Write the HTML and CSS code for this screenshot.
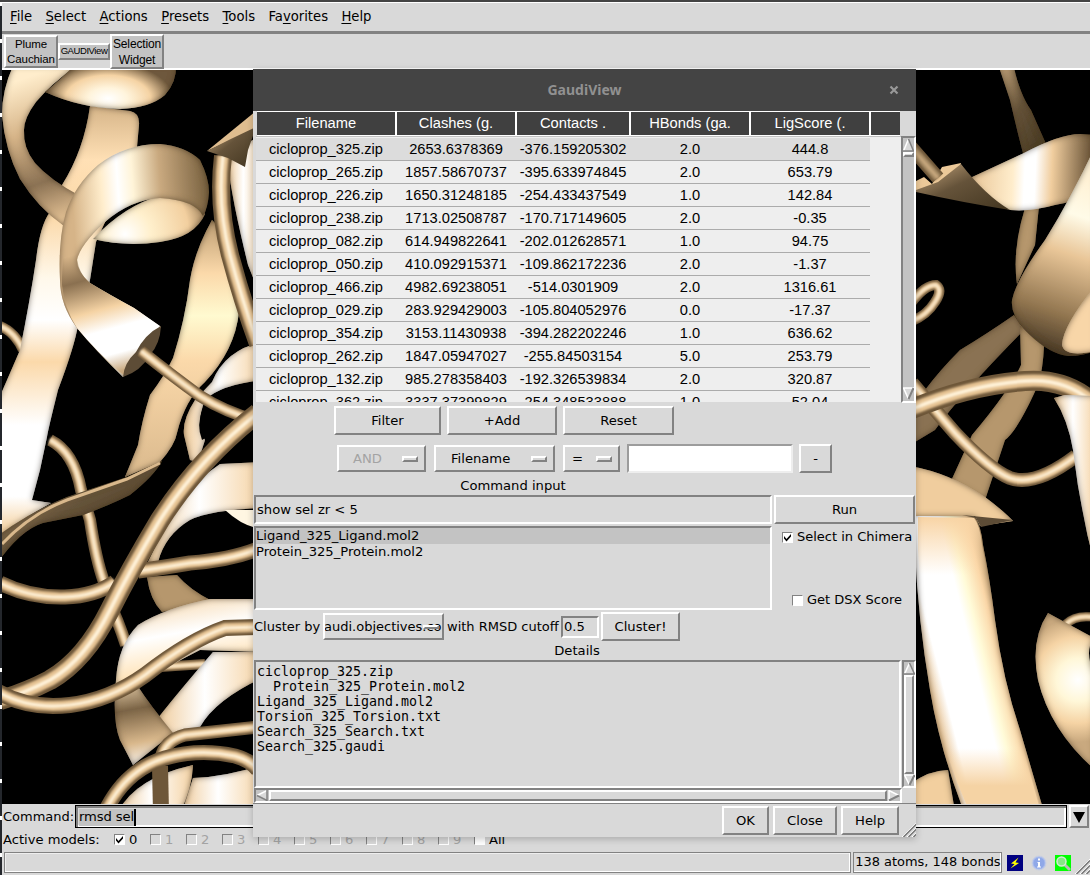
FILE: index.html
```
<!DOCTYPE html>
<html lang="en">
<head>
<meta charset="utf-8">
<title>GaudiView</title>
<link rel="stylesheet" href="styles.css">
</head>
<body>
<div class="screen">
<main class="main-window">
  <nav class="menubar">
    <span><u>F</u>ile</span><span><u>S</u>elect</span><span><u>A</u>ctions</span><span><u>P</u>resets</span><span><u>T</u>ools</span><span>Fa<u>v</u>orites</span><span><u>H</u>elp</span>
  </nav>
  <div class="toolbar">
    <button class="tool tool-plume">Plume<br>Cauchian</button>
    <button class="tool tool-gaudi">GAUDIView</button>
    <button class="tool tool-select">Selection<br>Widget</button>
  </div>
  <svg class="viewport" viewBox="2 70 1088 734" width="1088" height="734">
    <defs>
      <filter id="shade" x="-5%" y="-5%" width="110%" height="110%">
        <feGaussianBlur in="SourceAlpha" stdDeviation="3" result="b"/>
        <feFlood flood-color="#4a3820"/>
        <feComposite operator="out" in2="b"/>
        <feComposite operator="in" in2="SourceAlpha" result="edge"/>
        <feMerge><feMergeNode in="SourceGraphic"/><feMergeNode in="edge"/></feMerge>
      </filter>
      <linearGradient id="gA" gradientUnits="userSpaceOnUse" x1="0" y1="110" x2="0" y2="530">
        <stop offset="0" stop-color="#d9b88c"/><stop offset=".12" stop-color="#ffe0b5"/><stop offset=".25" stop-color="#fbd8a8"/><stop offset=".4" stop-color="#fff8ea"/><stop offset=".5" stop-color="#fff"/><stop offset=".6" stop-color="#fbd9aa"/><stop offset=".75" stop-color="#fff"/><stop offset=".92" stop-color="#fff"/><stop offset="1" stop-color="#f5d3a4"/>
      </linearGradient>
      <linearGradient id="gB" gradientUnits="userSpaceOnUse" x1="20" y1="80" x2="70" y2="220">
        <stop offset="0" stop-color="#ffedcc"/><stop offset=".35" stop-color="#d6b488"/><stop offset=".7" stop-color="#8b7254"/><stop offset="1" stop-color="#e9c698"/>
      </linearGradient>
      <radialGradient id="gTop" gradientUnits="userSpaceOnUse" cx="108" cy="99" r="65" gradientTransform="matrix(1 0 0 .55 0 44)">
        <stop offset="0" stop-color="#fff"/><stop offset=".3" stop-color="#fff4dc"/><stop offset=".65" stop-color="#f5d3a4"/><stop offset="1" stop-color="#6e583c"/>
      </radialGradient>
      <linearGradient id="gC" gradientUnits="userSpaceOnUse" x1="72" y1="200" x2="209" y2="190">
        <stop offset="0" stop-color="#d6b488"/><stop offset=".22" stop-color="#ffedcc"/><stop offset=".34" stop-color="#fff"/><stop offset=".45" stop-color="#fff4d8"/><stop offset=".65" stop-color="#c9a97f"/><stop offset="1" stop-color="#77603f"/>
      </linearGradient>
      <linearGradient id="gC3" gradientUnits="userSpaceOnUse" x1="85" y1="252" x2="118" y2="372">
        <stop offset="0" stop-color="#8a7050" stop-opacity="0"/><stop offset=".22" stop-color="#8a7050"/><stop offset=".48" stop-color="#f5d3a4"/><stop offset=".65" stop-color="#fff"/><stop offset=".85" stop-color="#fff"/><stop offset="1" stop-color="#c9a97f"/>
      </linearGradient>
      <radialGradient id="gC2" gradientUnits="userSpaceOnUse" cx="125" cy="234" r="85">
        <stop offset="0" stop-color="#fff"/><stop offset=".3" stop-color="#fff0cd"/><stop offset=".75" stop-color="#f2cf9f"/><stop offset="1" stop-color="#9a7d58"/>
      </radialGradient>
      <linearGradient id="gD" gradientUnits="userSpaceOnUse" x1="0" y1="215" x2="0" y2="480">
        <stop offset="0" stop-color="#b6976d"/><stop offset=".22" stop-color="#fbd9aa"/><stop offset=".38" stop-color="#fffad0"/><stop offset=".55" stop-color="#fbd9aa"/><stop offset="1" stop-color="#d9b88c"/>
      </linearGradient>
      <linearGradient id="gDark" x1="0" y1="0" x2="1" y2="1">
        <stop offset="0" stop-color="#c9a97f"/><stop offset=".45" stop-color="#65533a"/><stop offset="1" stop-color="#42351f"/>
      </linearGradient>
      <linearGradient id="gLite" x1="0" y1="0" x2="1" y2="0">
        <stop offset="0" stop-color="#f0cd9e"/><stop offset=".45" stop-color="#fff"/><stop offset="1" stop-color="#f5d3a4"/>
      </linearGradient>
      <linearGradient id="gM" gradientUnits="userSpaceOnUse" x1="125" y1="600" x2="155" y2="765">
        <stop offset="0" stop-color="#f5d3a4"/><stop offset=".25" stop-color="#fff"/><stop offset=".45" stop-color="#ffe6bf"/><stop offset=".65" stop-color="#7b6446"/><stop offset=".85" stop-color="#d9b88c"/><stop offset="1" stop-color="#fff"/>
      </linearGradient>
      <linearGradient id="gHelix" gradientUnits="userSpaceOnUse" x1="972" y1="160" x2="1090" y2="165">
        <stop offset="0" stop-color="#e9c698"/><stop offset=".35" stop-color="#ffedcc"/><stop offset=".45" stop-color="#fff"/><stop offset=".54" stop-color="#fff"/><stop offset=".68" stop-color="#f0cd9e"/><stop offset="1" stop-color="#6b5539"/>
      </linearGradient>
      <linearGradient id="gR" gradientUnits="userSpaceOnUse" x1="1085" y1="180" x2="1028" y2="350">
        <stop offset="0" stop-color="#fff2d6"/><stop offset=".2" stop-color="#fffbe8"/><stop offset=".42" stop-color="#e9c698"/><stop offset=".75" stop-color="#927650"/><stop offset="1" stop-color="#3d3020"/>
      </linearGradient>
      <linearGradient id="gCol" gradientUnits="userSpaceOnUse" x1="921" y1="655" x2="1005" y2="634">
        <stop offset="0" stop-color="#e9c698"/><stop offset=".16" stop-color="#fff"/><stop offset=".58" stop-color="#fff"/><stop offset=".7" stop-color="#fffbd8"/><stop offset=".88" stop-color="#fbd7a8"/><stop offset="1" stop-color="#cba87a"/>
      </linearGradient>
      <linearGradient id="gColEnd" x1="0" y1="0" x2="0" y2="1">
        <stop offset="0" stop-color="#f8d4a5"/><stop offset=".2" stop-color="#fbd7a8" stop-opacity="0"/><stop offset=".8" stop-color="#fbd7a8" stop-opacity="0"/><stop offset=".93" stop-color="#f5d3a4"/>
      </linearGradient>
      <radialGradient id="gP" gradientUnits="userSpaceOnUse" cx="1078" cy="680" r="62">
        <stop offset="0" stop-color="#fff"/><stop offset=".35" stop-color="#fff7d8"/><stop offset=".7" stop-color="#f5d3a4"/><stop offset="1" stop-color="#c9a97f"/>
      </radialGradient>
      <path id="t1" d="M223 156Q217 205 230 255Q242 300 258 344"/>
      <path id="t2" d="M141 351Q175 378 200 396Q225 412 258 421"/>
      <path id="t3" d="M0 326Q15 332 23 350"/>
      <path id="t4" d="M50 440Q74 452 81 490L90 520Q96 560 104 582"/>
      <path id="t5" d="M108 600Q118 620 126 645"/>
      <path id="t6" d="M0 583Q30 598 65 597Q95 596 115 582"/>
      <path id="t7" d="M138 571Q160 568 190 563Q230 560 258 549"/>
      <path id="t8" d="M258 413Q200 458 160 520Q130 570 110 610Q85 660 50 680Q25 693 0 700"/>
      <path id="t9" d="M-2 692Q30 710 70 705Q110 700 145 675Q190 640 225 628L258 627"/>
      <path id="t10" d="M160 667L205 664"/>
      <path id="t11" d="M161 758Q165 740 185 735L258 727"/>
      <path id="t12" d="M105 812Q125 770 165 758Q200 748 235 756Q250 760 258 770"/>
      <path id="t13" d="M160 766L161 812"/>
      <path id="r1" d="M910 146L938 178"/>
      <path id="r2" d="M912 302Q925 285 936 285Q943 290 935 302Q927 315 912 321"/>
      <path id="r3" d="M912 409Q970 385 1025 381Q1065 378 1092 402"/>
      <path id="r4" d="M912 383Q935 410 955 433Q990 470 1010 478Q1035 487 1076 456"/>
      <path id="r5" d="M1066 624Q1075 615 1092 617"/>
    </defs>
    <rect x="2" y="70" width="1088" height="734" fill="#000"/>

    <g class="left-structure">
      <g class="tube w10"><use href="#t3"/><use href="#t3"/><use href="#t3"/></g>
      <path filter="url(#shade)" fill="url(#gA)" d="M90 106L130 111Q140 113 139 125L137 147Q120 190 96 242L90 280L78 325Q75 345 58 390Q48 430 47 437L40 470L32 500L51 503Q20 520-6 540L-6 410Q7 380 20 350Q30 300 36 260Q40 225 50 212L62 185Q84 150 90 106Z"/>
      <path filter="url(#shade)" fill="url(#gB)" d="M13 66Q2 90 2 115Q5 150 20 179Q38 208 64 226L80 196Q50 180 35 163Q23 148 24 130Q24 118 36 102Q50 85 76 66Z"/>
      <path filter="url(#shade)" fill="url(#gTop)" d="M45 92Q60 80 76 64L176 64Q177 82 165 95Q150 108 120 109Q80 108 45 92Z"/>
      <path filter="url(#shade)" fill="url(#gD)" d="M212 220Q195 250 190 280Q185 320 173 358Q165 375 150 395Q142 420 138 445L125 477L160 462Q175 445 177 433Q185 400 205 382Q235 350 239 312Q232 270 217 225Z"/>
      <path filter="url(#shade)" fill="url(#gLite)" d="M228 165Q240 145 262 135L262 300L248 265Q232 200 228 165Z"/>
      <path filter="url(#shade)" fill="url(#gLite)" d="M262 342Q225 350 212 382L195 400Q182 420 184 435L190 460L198 462L205 440Q195 425 205 400Q220 385 262 380Z"/>
      <path fill="#000" d="M256 381Q226 391 203 408Q196 425 202 440L222 428L256 406Z"/>
      <g class="tube w18"><use href="#t1"/><use href="#t1"/><use href="#t1"/></g>
      <path fill="#dfbd8f" d="M207 151L256 111V128Q225 143 207 151Z"/>
      <path fill="url(#gDark)" d="M207 151Q230 139 256 127L248 150L245 167L228 158Z"/>
      <path filter="url(#shade)" fill="url(#gC2)" d="M93 239Q125 205 160 196Q190 197 205 214Q195 237 160 242Q125 247 93 239Z"/>
      <path filter="url(#shade)" fill="url(#gC)" d="M160 144Q185 146 200 160Q209 178 209 192Q208 208 203 216Q195 200 160 198Q130 200 105 222Q80 245 77 260Q77 272 90 283Q110 295 134 308L161 327L143 352L123 377Q95 350 77 328Q60 305 60 280Q58 240 66 212Q75 185 98 165Q125 144 160 144Z"/>
      <path fill="url(#gC3)" d="M77 250Q76 272 90 283Q110 295 134 308L160 326L143 352L123 375Q95 350 77 328Q64 308 62 285Q62 265 64 250Z"/>
      <path fill="#5d4c36" d="M161 326Q145 334 136 352Q124 363 123 377Q141 371 150 355Q160 344 161 326Z"/>
      <g class="tube w11"><use href="#t2"/><use href="#t2"/><use href="#t2"/></g>
      <g class="tube w12"><use href="#t4"/><use href="#t4"/><use href="#t4"/></g>
      <g class="tube w12"><use href="#t5"/><use href="#t5"/><use href="#t5"/></g>
      <path filter="url(#shade)" fill="url(#gDark)" d="M162 461L127 477L67 497Q30 512-4 537L-4 565Q20 530 43 523L83 515Q110 505 130 495Q155 475 162 461Z"/>
      <path class="rim" d="M160 463L127 479L67 500Q30 514 2 544"/>
      <path filter="url(#shade)" fill="url(#gLite)" d="M262 462L220 464Q195 480 180 505Q160 535 148 562L158 562Q165 535 190 520Q210 510 262 508Z"/>
      <path fill="#fff6e2" d="M225 510H256V528Q240 524 225 510Z"/>
      <path filter="url(#shade)" fill="#b6976d" d="M147 577Q150 600 162 612L212 601Q190 590 177 575Z"/>
      <g class="tube w15"><use href="#t6"/><use href="#t6"/><use href="#t6"/></g>
      <g class="tube w15"><use href="#t7"/><use href="#t7"/><use href="#t7"/></g>
      <g class="tube w10"><use href="#t10"/><use href="#t10"/><use href="#t10"/></g>
      <path filter="url(#shade)" fill="url(#gLite)" d="M213 652Q180 690 158 718L172 735L200 727Q215 700 262 678L262 652Z"/>
      <path filter="url(#shade)" fill="url(#gM)" d="M262 599H210Q165 608 138 625Q118 645 116 680Q112 720 120 740L133 765L173 733Q150 705 137 685Q170 665 200 650L262 652Z"/>
      <g class="tube w19"><use href="#t8"/><use href="#t8"/><use href="#t8"/></g>
      <g class="tube w16"><use href="#t9"/><use href="#t9"/><use href="#t9"/></g>
      <path filter="url(#shade)" fill="url(#gLite)" d="M118 812Q135 778 193 765Q192 790 180 812Z"/>
      <path filter="url(#shade)" fill="url(#gLite)" d="M193 778Q225 777 262 765V812H182Z"/>
      <g class="tube w13"><use href="#t11"/><use href="#t11"/><use href="#t11"/></g>
      <g class="tube dim w16"><use href="#t13"/></g>
      <g class="tube w15"><use href="#t12"/><use href="#t12"/><use href="#t12"/></g>
    </g>

    <g class="right-structure">
      <path filter="url(#shade)" fill="url(#gDark)" d="M998 64H1013Q1020 95 1031 110L1047 146L1024 157Q1018 135 1010 100Z"/>
      <path filter="url(#shade)" fill="#b6976d" d="M1025 208L1039 206L1035 245L1017 284Q1012 250 1025 208Z"/>
      <path filter="url(#shade)" fill="url(#gHelix)" d="M970 178L1024 153Q1060 134 1080 134L1096 135V190Q1075 202 1055 205Q1030 212 1010 210Q990 205 970 178Z"/>
      <path fill="#ecc999" d="M916 181L924 177L932 184L942 167L961 163L958 176L930 188L916 191Z"/>
      <path fill="url(#gDark)" d="M916 190L938 182L961 164Q985 195 1010 210Q960 202 916 192Z"/>
      <g class="tube dim w14"><use href="#r1"/><use href="#r1"/><use href="#r1"/></g>
      <g class="tube w10"><use href="#r2"/><use href="#r2"/><use href="#r2"/></g>
      <path filter="url(#shade)" fill="#8a7252" d="M1014 315Q985 335 960 350Q940 370 925 390L910 410V445L935 430Q960 395 1024 330Z"/>
      <path filter="url(#shade)" fill="#b6976d" d="M1020 325L1044 346Q1043 370 1038 385Q1018 430 1005 440L985 500L951 481L972 435Q1010 390 1021 365Z"/>
      <path filter="url(#shade)" fill="url(#gR)" d="M1096 145Q1070 200 1045 240Q1016 280 1012 300Q1010 317 1030 335Q1050 354 1068 356Q1085 356 1096 350Z"/>
      <path filter="url(#shade)" fill="#f8d6a8" d="M1096 285Q1063 325 1062 345Q1065 358 1096 351Z"/>
      <g class="tube w14"><use href="#r4"/><use href="#r4"/><use href="#r4"/></g>
      <g class="tube w20"><use href="#r3"/><use href="#r3"/><use href="#r3"/></g>
      <path filter="url(#shade)" fill="url(#gLite)" d="M1054 398L1065 395L1096 396V570Q1080 510 1073 450Q1068 420 1054 398Z"/>
      <path filter="url(#shade)" fill="url(#gCol)" d="M912 514L974 516Q981 525 983 545Q990 580 995 620Q1003 680 1020 730L1044 812H964Q940 750 930 690Q918 620 915 550Z"/>
      <path fill="url(#gColEnd)" d="M918 517L974 518Q980 525 982 545Q989 580 994 620Q1002 680 1018 730L1039 806H967Q942 750 933 690Q921 620 918 550Z"/>
      <path filter="url(#shade)" fill="#f0cd9e" d="M910 466Q950 473 985 497Q1005 512 1013 521L980 526L975 516H910Z"/>
      <path fill="#5d4c36" d="M962 515L1013 520L981 527L976 518Z"/>
      <path filter="url(#shade)" fill="#f2cf9f" d="M910 784Q930 770 948 770L955 812H910Z"/>
      <g class="tube w9"><use href="#r5"/><use href="#r5"/><use href="#r5"/></g>
      <path filter="url(#shade)" fill="url(#gP)" d="M1048 613L1094 638Q1084 650 1094 675V769Q1050 730 1038 680Q1030 640 1048 613Z"/>
    </g>
  </svg>
  <div class="command-row">
    <label>Command:</label>
    <div class="command-entry"><span class="typed">rmsd sel</span></div>
    <button class="drop"><svg width="14" height="12"><path d="M1 1H13L7 12Z"/></svg></button>
  </div>
  <div class="models-row">
    <label>Active models:</label>
    <span class="model on"><i class="check ticked"><svg width="9" height="9"><path d="M1 3L3.500 6L8 1V3.500L3.500 8.500L1 5.500Z"/></svg></i>0</span>
    <span class="model"><i class="check"></i>1</span><span class="model"><i class="check"></i>2</span><span class="model"><i class="check"></i>3</span><span class="model"><i class="check"></i>4</span><span class="model"><i class="check"></i>5</span><span class="model"><i class="check"></i>6</span><span class="model"><i class="check"></i>7</span><span class="model"><i class="check"></i>8</span><span class="model"><i class="check"></i>9</span>
    <span class="model on"><i class="check white"></i>All</span>
  </div>
  <footer class="statusbar">
    <div class="status-message"></div>
    <div class="status-count">138 atoms, 148 bonds</div>
    <svg class="status-icons" width="66" height="16">
      <rect width="16" height="16" fill="#000080"/><path d="M11.500 2.500L4 8.500L7.500 9L3.500 13.500L12 8L8.500 7.500Z" fill="#ff0"/>
      <circle cx="32" cy="8" r="7" fill="#a9bcec" stroke="#c9d0e4"/><circle cx="32" cy="8" r="5.500" fill="#8fa8e8"/><path d="M31 3.500H33V5.500H31ZM30.500 7H33V11.500H34V12.500H30V11.500H31V8H30.500Z" fill="#fff"/>
      <rect x="48" width="16" height="16" fill="#0f0"/><path d="M58 10L62 14" stroke="#b9b9b9" stroke-width="3" stroke-linecap="round"/><circle cx="54.500" cy="6.500" r="4.500" fill="#86e786" stroke="#d5ead5" stroke-width="1.500"/>
    </svg>
    <svg class="grip" width="15" height="15"><path d="M0 15L15 0M5 15L15 5M10 15L15 10" stroke="#fff"/><path d="M1.500 15L15 1.500M6.500 15L15 6.500M11.500 15L15 11.500" stroke="#777" stroke-width="1.500"/></svg>
  </footer>
</main>

<section class="dialog">
  <header class="titlebar"><span class="title">GaudiView</span><svg class="close" width="10" height="10"><path d="M1.500 1.500L8.500 8.500M8.500 1.500L1.500 8.500" stroke="#999" stroke-width="2.200"/></svg></header>
  <div class="table-head">
    <span>Filename</span><span>Clashes (g.</span><span>Contacts .</span><span>HBonds (ga.</span><span>LigScore (.</span><span></span>
  </div>
  <div class="table-wrap">
    <div class="table-body">
      <div class="row picked"><span>cicloprop_325.zip</span><span>2653.6378369</span><span>-376.159205302</span><span>2.0</span><span>444.8</span></div>
      <div class="row"><span>cicloprop_265.zip</span><span>1857.58670737</span><span>-395.633974845</span><span>2.0</span><span>653.79</span></div>
      <div class="row"><span>cicloprop_226.zip</span><span>1650.31248185</span><span>-254.433437549</span><span>1.0</span><span>142.84</span></div>
      <div class="row"><span>cicloprop_238.zip</span><span>1713.02508787</span><span>-170.717149605</span><span>2.0</span><span>-0.35</span></div>
      <div class="row"><span>cicloprop_082.zip</span><span>614.949822641</span><span>-202.012628571</span><span>1.0</span><span>94.75</span></div>
      <div class="row"><span>cicloprop_050.zip</span><span>410.092915371</span><span>-109.862172236</span><span>2.0</span><span>-1.37</span></div>
      <div class="row"><span>cicloprop_466.zip</span><span>4982.69238051</span><span>-514.0301909</span><span>2.0</span><span>1316.61</span></div>
      <div class="row"><span>cicloprop_029.zip</span><span>283.929429003</span><span>-105.804052976</span><span>0.0</span><span>-17.37</span></div>
      <div class="row"><span>cicloprop_354.zip</span><span>3153.11430938</span><span>-394.282202246</span><span>1.0</span><span>636.62</span></div>
      <div class="row"><span>cicloprop_262.zip</span><span>1847.05947027</span><span>-255.84503154</span><span>5.0</span><span>253.79</span></div>
      <div class="row"><span>cicloprop_132.zip</span><span>985.278358403</span><span>-192.326539834</span><span>2.0</span><span>320.87</span></div>
      <div class="row"><span>cicloprop_362.zip</span><span>3337.37399829</span><span>-254.348533888</span><span>1.0</span><span>52.04</span></div>
    </div>
    <div class="vscroll">
      <svg class="arrow" width="11" height="14"><path d="M5.500 1L10.500 13H.5Z" fill="#d9d9d9"/><path d="M.5 13L5.500 1" stroke="#fff" stroke-width="1.500"/><path d="M5.500 1L10.500 13H0" fill="none" stroke="#828282" stroke-width="1.500"/></svg>
      <i class="thumb tiny"></i>
      <svg class="arrow end" width="11" height="14"><path d="M5.500 12L10.500 1H.5Z" fill="#d9d9d9"/><path d="M5.500 12L.5 1H11" fill="none" stroke="#fff" stroke-width="1.500"/><path d="M5.500 12L10.500 1" stroke="#828282" stroke-width="2"/></svg>
    </div>
  </div>
  <div class="filter-buttons"><button class="btn b-filter">Filter</button><button class="btn b-add">+Add</button><button class="btn b-reset">Reset</button></div>
  <div class="filter-row">
    <div class="option o-and">AND<i class="knob"></i></div>
    <div class="option o-name">Filename<i class="knob"></i></div>
    <div class="option o-eq">=<i class="knob"></i></div>
    <div class="filter-entry"></div>
    <button class="btn b-minus">-</button>
  </div>
  <div class="caption cap-command">Command input</div>
  <div class="command-grid">
    <div class="sunken input">show sel zr &lt; 5</div>
    <button class="btn b-run">Run</button>
    <div class="sunken list"><div class="item chosen">Ligand_325_Ligand.mol2</div><div class="item">Protein_325_Protein.mol2</div></div>
    <div class="checks">
      <label><i class="check ticked"><svg width="9" height="9"><path d="M1 3L3.500 6L8 1V3.500L3.500 8.500L1 5.500Z"/></svg></i>Select in Chimera</label>
      <label class="dsx"><i class="check white"></i>Get DSX Score</label>
    </div>
  </div>
  <div class="cluster-row">
    <span class="by">Cluster by</span>
    <div class="option o-obj"><span>audi.objectives.co</span><i class="knob"></i></div>
    <span class="with">with RMSD cutoff</span>
    <div class="sunken cutoff">0.5</div>
    <button class="btn b-cluster">Cluster!</button>
  </div>
  <div class="caption cap-details">Details</div>
  <div class="details">
    <pre class="sunken">cicloprop_325.zip
  Protein_325_Protein.mol2
Ligand_325_Ligand.mol2
Torsion_325_Torsion.txt
Search_325_Search.txt
Search_325.gaudi</pre>
    <div class="vscroll">
      <svg class="arrow" width="11" height="13"><path d="M5.500 1L10.500 12H.5Z" fill="#d9d9d9"/><path d="M.5 12L5.500 1" stroke="#fff" stroke-width="1.500"/><path d="M5.500 1L10.500 12H0" fill="none" stroke="#828282" stroke-width="1.500"/></svg>
      <i class="thumb full"></i>
      <svg class="arrow end" width="11" height="12"><path d="M5.500 11L10.500 1H.5Z" fill="#d9d9d9"/><path d="M5.500 11L.5 1H11" fill="none" stroke="#fff" stroke-width="1.500"/><path d="M5.500 11L10.500 1" stroke="#828282" stroke-width="2"/></svg>
    </div>
  </div>
  <div class="hscroll">
    <svg width="12" height="11"><path d="M1 5.500L11 .5V10.500Z" fill="#d9d9d9"/><path d="M1 5.500L11 .5" stroke="#fff" stroke-width="1.500"/><path d="M1 5.500L11 10.500V0" fill="none" stroke="#828282" stroke-width="1.500"/></svg>
    <i class="thumb wide"></i>
    <svg width="12" height="11"><path d="M11 5.500L1 .5V10.500Z" fill="#d9d9d9"/><path d="M11 5.500L1 .5V11" fill="none" stroke="#fff" stroke-width="1.500"/><path d="M11 5.500L1 10.500" stroke="#828282" stroke-width="2"/></svg>
  </div>
  <div class="dialog-buttons">
    <button class="btn b-ok">OK</button><button class="btn b-close">Close</button><button class="btn b-help">Help</button>
    <svg class="grip" width="15" height="15"><path d="M0 15L15 0M5 15L15 5M10 15L15 10" stroke="#fff"/><path d="M1.500 15L15 1.500M6.500 15L15 6.500M11.500 15L15 11.500" stroke="#777" stroke-width="1.500"/></svg>
  </div>
</section>
</div>
</body>
</html>
```
FILE: styles.css
```
* { box-sizing: border-box; }
body { margin: 0; background: #d9d9d9; color: #000; font: 13.150px/16px "DejaVu Sans", sans-serif; }
button { font: inherit; color: inherit; padding: 0; margin: 0; background: #d9d9d9; border-radius: 0; flex: none; }
i { font-style: normal; }
.screen { position: relative; width: 1090px; height: 875px; overflow: hidden; }

/* main window */
.main-window { width: 1090px; height: 875px; display: flex; flex-direction: column; padding-left: 2px; border-top: 2px solid #444; background: repeating-linear-gradient(#fff 0 4px, #24272c 4px 37px) 0 0 / 2px 100% no-repeat #d9d9d9; }
.menubar { height: 32px; display: flex; gap: 13.400px; padding: 6px 0 0 8px; border-top: 1px solid #fff; border-bottom: 3px solid #828282; font-size: 13.200px; background: #d9d9d9; }
.menubar u { text-underline-offset: 2px; }
.toolbar { height: 36px; display: flex; align-items: center; padding-left: 2px; border-bottom: 2px solid #fff; background: #d9d9d9; }
.tool { border: 2px solid; border-color: #fff #828282 #828282 #fff; background: #c3c3c3; font: 12px/15px "Liberation Sans", sans-serif; white-space: nowrap; }
.tool-plume { width: 54px; height: 33px; font-size: 11.500px; letter-spacing: -.1px; }
.tool-gaudi { width: 52px; height: 17px; font-size: 9.500px; line-height: 12px; letter-spacing: -.42px; }
.tool-select { width: 54px; height: 35px; line-height: 16px; letter-spacing: -.15px; }
.viewport { display: block; flex: none; }
.tube use { fill: none; stroke-linecap: butt; }
.tube use:nth-child(1) { stroke: #6e5739; stroke-width: var(--w); }
.tube use:nth-child(2) { stroke: #e6c393; stroke-width: calc(var(--w) * .62); filter: blur(1.200px); }
.tube use:nth-child(3) { stroke: #fff2d9; stroke-width: calc(var(--w) * .2); filter: blur(1.100px); }
.tube.dim use:nth-child(2) { stroke: #a58a64; }
.tube.dim use:nth-child(3) { stroke: #c9a97f; }
.w9 { --w: 9px; } .w10 { --w: 10px; } .w11 { --w: 12px; } .w12 { --w: 12px; } .w13 { --w: 13px; } .w14 { --w: 14px; }
.w15 { --w: 15px; } .w16 { --w: 16px; } .w18 { --w: 18px; } .w19 { --w: 20px; } .w20 { --w: 20px; }
.rim { fill: none; stroke: #d9b88c; stroke-width: 3px; filter: blur(.6px); }

.command-row { height: 26px; display: flex; align-items: flex-start; background: #d9d9d9; padding-top: 1px; }
.command-row label { width: 73px; padding: 4px 0 0 1px; font-size: 13px; }
.command-entry { width: 992px; height: 23px; border: 1px solid #000; box-shadow: inset 2px 2px #828282, inset -2px -2px #fff; padding: 3px 0 0 3px; }
.typed { display: inline-block; height: 17px; background: #c3c3c3; border-right: 2px solid #000; letter-spacing: -.12px; }
.drop { width: 20px; height: 23px; margin-left: 2px; border: 2px solid; border-color: #fff #828282 #828282 #fff; display: grid; place-items: center; }
.models-row { height: 22px; display: flex; align-items: center; background: #d9d9d9; padding: 0 0 3px 1px; font-size: 13.100px; }
.models-row label { width: 111px; flex: none; }
.model { width: 36px; flex: none; display: flex; align-items: center; gap: 4px; color: #a3a3a3; }
.model.on { color: #000; }
.check { width: 11px; height: 11px; flex: none; border: 1px solid; border-color: #828282 #fff #fff #828282; display: grid; place-items: center; }
.check.ticked, .check.white { background: #fff; }
.statusbar { height: 23px; display: flex; background: #d9d9d9; padding-left: 2px; align-items: flex-start; }
.status-message { width: 848px; height: 21px; border: 1px solid #828282; box-shadow: inset -1px -1px #fff, inset 1px 1px #eee; }
.status-count { width: 149px; height: 21px; margin-left: 2px; border: 1px solid #828282; box-shadow: inset -1px -1px #fff; padding: 1px 0 0 1px; font-size: 12.950px; white-space: nowrap; }
.status-icons { margin: 3px 0 0 5px; }
.statusbar .grip { margin: 7px 0 0 2px; }

/* floating result window */
.dialog { position: absolute; left: 253px; top: 69px; width: 663px; height: 768px; background: #d9d9d9; display: flex; flex-direction: column; box-shadow: 0 2px 7px rgba(0,0,0,.22); }
.dialog > * { flex: none; }
.titlebar { height: 42px; background: #444; display: flex; align-items: center; justify-content: center; color: #919191; font: bold 14px "Noto Sans", sans-serif; position: relative; padding-bottom: 2px; }
.close { position: absolute; right: 17px; top: 16px; }
.table-head { height: 25px; display: grid; grid-template-columns: 138px 118px 112px 118px 118px 29px; gap: 2px; margin-left: 4px; width: 643px; padding: 1px 0 1px; background: #fff; font: 14.700px/23px "Liberation Sans", sans-serif; color: #fff; text-align: center; }
.table-head span { background: #404040; white-space: nowrap; }
.table-wrap { display: flex; height: 267px; padding-left: 3px; }
.table-body { width: 645px; height: 266px; overflow: hidden; background: #eee; padding-top: 1px; border-top: 1px solid #c0c0c0; font: 14.650px/22px "Liberation Sans", sans-serif; }
.row { display: grid; grid-template-columns: 140px 120px 114px 120px 120px; width: 614px; height: 23px; border-bottom: 1px solid #ababab; text-align: center; }
.row.picked { background: #dcdcdc; }
.row span { white-space: nowrap; }
.vscroll { width: 15px; background: #c3c3c3; border: 2px solid; border-color: #828282 #fff #fff #828282; display: flex; flex-direction: column; }
.vscroll svg, .hscroll svg { display: block; flex: none; }
.vscroll .end { margin-top: auto; }
.thumb { display: block; background: #d9d9d9; border: 2px solid; border-color: #fff #828282 #828282 #fff; }
.tiny { height: 5px; }
.full { flex: 1; }
.wide { flex: 1; margin: 0 1px; }

.btn { height: 29px; border: 2px solid; border-color: #fff #828282 #828282 #fff; text-align: center; font-size: 13.150px; }
.filter-buttons { display: flex; gap: 6px; padding: 3px 0 0 81px; height: 36px; }
.b-filter { width: 107px; } .b-add { width: 110px; } .b-reset { width: 111px; }
.filter-row { display: flex; align-items: center; height: 37px; padding: 2px 0 0 84px; }
.option { height: 27px; border: 2px solid; border-color: #fff #828282 #828282 #fff; display: flex; align-items: center; justify-content: space-between; white-space: nowrap; }
.knob { width: 16px; height: 6px; border: 2px solid; border-color: #fff #828282 #828282 #fff; }
.o-and { width: 89px; padding: 0 6px 0 14px; color: #a3a3a3; margin-right: 8px; }
.o-name { width: 121px; padding: 0 6px 0 15px; margin-right: 8px; }
.o-eq { width: 57px; padding: 0 6px 0 7px; margin-right: 7px; }
.filter-entry { width: 166px; height: 29px; background: #fff; border: 2px solid; border-color: #9c9c9c #eee #eee #9c9c9c; margin-right: 6px; }
.b-minus { width: 33px; }
.caption { text-align: center; }
.cap-command { width: 520px; height: 19px; padding-top: 2px; }
.command-grid { display: grid; grid-template-columns: 518px 141px; grid-template-rows: 29px 84px; column-gap: 2px; row-gap: 2px; margin-left: 1px; }
.sunken { border: 2px solid; border-color: #828282 #fff #fff #828282; }
.input { padding: 5px 0 0 1px; }
.item { height: 16px; white-space: nowrap; }
.chosen { background: #c3c3c3; }
.checks { padding: 3px 0 0 8px; }
.checks label { display: flex; align-items: center; gap: 4px; white-space: nowrap; font-size: 13px; }
.checks .dsx { margin: 47px 0 0 10px; }
.cluster-row { display: flex; align-items: center; height: 33px; padding-left: 1px; white-space: nowrap; }
.by { width: 69px; font-size: 13px; } .with { width: 117px; padding-left: 3px; font-size: 13px; }
.o-obj { width: 121px; position: relative; overflow: hidden; font-size: 13px; }
.o-obj span { margin-left: -1px; }
.o-obj .knob { position: absolute; right: 3px; top: 10px; height: 4px; }
.cutoff { width: 38px; height: 22px; padding: 1px; }
.b-cluster { width: 79px; margin-left: 2px; }
.cap-details { width: 648px; height: 17px; }
.details { display: flex; height: 128px; padding-left: 1px; }
.details pre { margin: 0 1px 0 0; width: 647px; padding: 2px 1px; font: 13.290px/15px "DejaVu Sans Mono", monospace; }
.details .vscroll { width: 14px; }
.hscroll { width: 648px; height: 15px; margin-left: 1px; display: flex; background: #c3c3c3; border: 2px solid; border-color: #828282 #fff #fff #828282; }
.dialog-buttons { height: 34px; border-top: 1px solid #828282; display: flex; padding: 2px 0 0 469px; }
.b-ok { width: 47px; } .b-close { width: 64px; margin-left: 4px; } .b-help { width: 58px; margin-left: 4px; }
.dialog-buttons .grip { margin: 16px 0 0 3px; }
```
